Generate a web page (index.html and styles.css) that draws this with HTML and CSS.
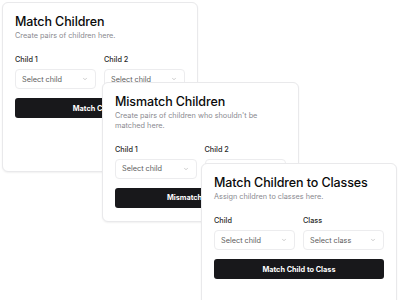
FILE: index.html
```html
<!DOCTYPE html>
<html lang="en">
<head>
<meta charset="utf-8">
<title>Children matching</title>
<link rel="stylesheet" href="styles.css">
</head>
<body>
<main class="canvas">
  <section class="card card-1">
    <header class="card-header">
      <h2 class="card-title">Match Children</h2>
      <p class="card-desc">Create pairs of children here.</p>
    </header>
    <div class="card-body">
      <div class="fields">
        <div class="field">
          <span class="field-label">Child 1</span>
          <div class="select"><span>Select child</span><svg class="chev" viewBox="0 0 24 24"><path d="m6 9 6 6 6-6"/></svg></div>
        </div>
        <div class="field">
          <span class="field-label">Child 2</span>
          <div class="select"><span>Select child</span><svg class="chev" viewBox="0 0 24 24"><path d="m6 9 6 6 6-6"/></svg></div>
        </div>
      </div>
      <button class="btn">Match Children</button>
    </div>
  </section>

  <section class="card card-2">
    <header class="card-header">
      <h2 class="card-title">Mismatch Children</h2>
      <p class="card-desc">Create pairs of children who shouldn't be matched here.</p>
    </header>
    <div class="card-body">
      <div class="fields">
        <div class="field">
          <span class="field-label">Child 1</span>
          <div class="select"><span>Select child</span><svg class="chev" viewBox="0 0 24 24"><path d="m6 9 6 6 6-6"/></svg></div>
        </div>
        <div class="field">
          <span class="field-label">Child 2</span>
          <div class="select"><span>Select child</span><svg class="chev" viewBox="0 0 24 24"><path d="m6 9 6 6 6-6"/></svg></div>
        </div>
      </div>
      <button class="btn">Mismatch Children</button>
    </div>
  </section>

  <section class="card card-3">
    <header class="card-header">
      <h2 class="card-title">Match Children to Classes</h2>
      <p class="card-desc">Assign children to classes here.</p>
    </header>
    <div class="card-body">
      <div class="fields">
        <div class="field">
          <span class="field-label">Child</span>
          <div class="select"><span>Select child</span><svg class="chev" viewBox="0 0 24 24"><path d="m6 9 6 6 6-6"/></svg></div>
        </div>
        <div class="field">
          <span class="field-label">Class</span>
          <div class="select"><span>Select class</span><svg class="chev" viewBox="0 0 24 24"><path d="m6 9 6 6 6-6"/></svg></div>
        </div>
      </div>
      <button class="btn">Match Child to Class</button>
    </div>
  </section>
</main>
</body>
</html>
```

FILE: styles.css
```css
* { box-sizing: border-box; }

html, body {
  margin: 0;
  padding: 0;
  background: #ffffff;
  font-family: Inter, "Noto Sans", "Liberation Sans", sans-serif;
  color: #0a0a0a;
}

.canvas {
  position: relative;
  width: 400px;
  height: 300px;
  overflow: hidden;
}

.card {
  position: absolute;
  width: 196px;
  background: #ffffff;
  border: 1px solid #e9e9eb;
  border-radius: 6px;
  box-shadow: 0 1px 2px rgba(0, 0, 0, 0.06);
  padding: 10.5px 12px 13px;
  display: flex;
  flex-direction: column;
}

.card-1 { left: 2px; top: 2px; height: 170px; }
.card-2 { left: 102px; top: 82px; width: 197px; }
.card-3 { left: 201px; top: 163px; height: 170px; }

.card-header {
  display: flex;
  flex-direction: column;
  gap: 1.5px;
}

.card-title {
  margin: 0;
  font-size: 12.5px;
  line-height: 16px;
  font-weight: 500;
  letter-spacing: -0.1px;
  color: #0a0a0a;
}

.card-desc {
  margin: 0;
  font-size: 7.3px;
  line-height: 9.5px;
  color: #8a8a90;
  max-width: 160px;
}

.card-body {
  margin-top: 14.5px;
  display: flex;
  flex-direction: column;
  gap: 9px;
}

.fields {
  display: grid;
  grid-template-columns: 1fr 1fr;
  gap: 8px;
}

.field {
  display: flex;
  flex-direction: column;
  gap: 5px;
}

.field-label {
  font-size: 7.3px;
  line-height: 9px;
  font-weight: 500;
  color: #2a2a2a;
}

.select {
  height: 20px;
  border: 1px solid #ececee;
  border-radius: 4px;
  padding: 0 7px 0 6px;
  display: flex;
  align-items: center;
  justify-content: space-between;
  font-size: 7.3px;
  color: #5c5c5c;
  background: #ffffff;
}

.chev {
  width: 6px;
  height: 6px;
  fill: none;
  stroke: #9a9a9a;
  stroke-width: 2;
  stroke-linecap: round;
  stroke-linejoin: round;
}

.btn {
  height: 20px;
  width: 100%;
  border: none;
  border-radius: 3px;
  background: #18181b;
  color: #ffffff;
  font-family: Inter, "Noto Sans", "Liberation Sans", sans-serif;
  font-size: 7.3px;
  font-weight: 700;
  padding: 0;
}
```
